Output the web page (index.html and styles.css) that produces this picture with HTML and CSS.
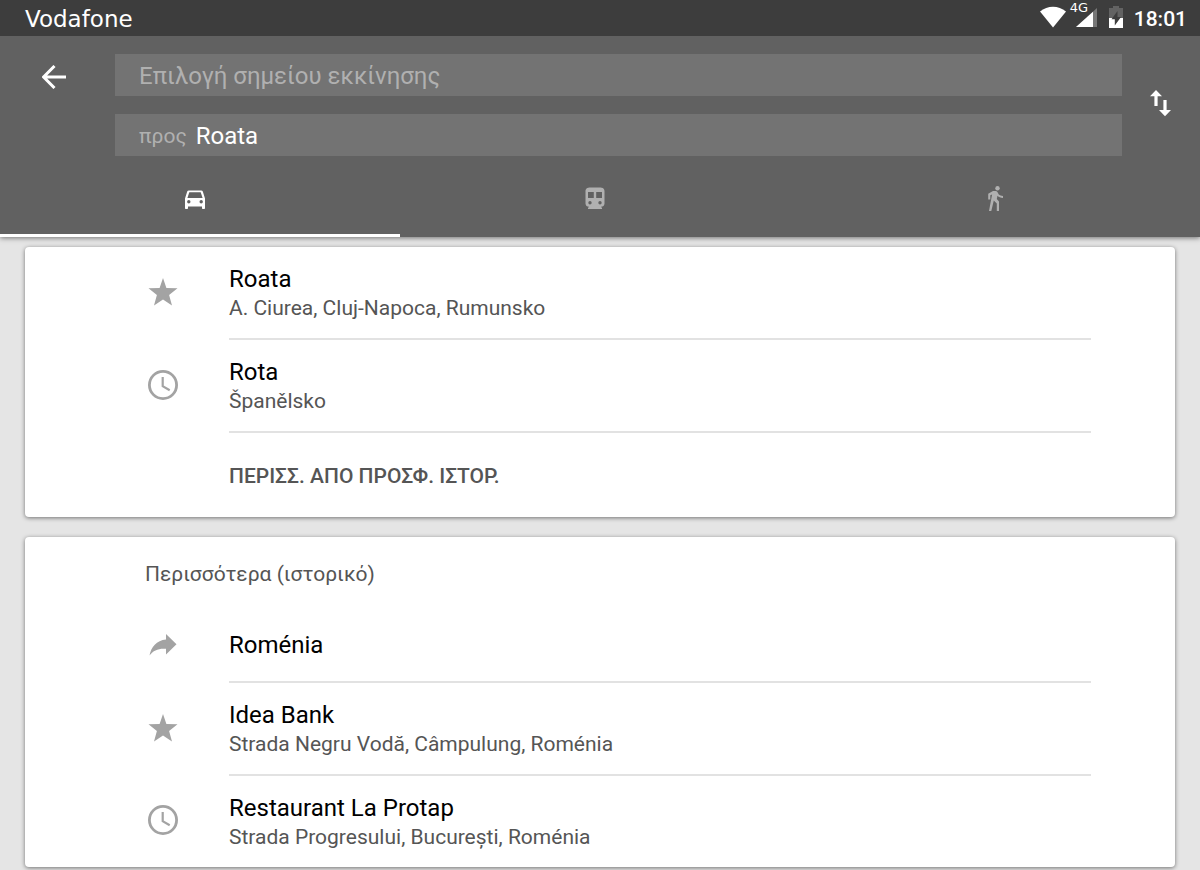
FILE: index.html
```html
<!DOCTYPE html>
<html lang="el">
<head>
<meta charset="utf-8">
<meta name="viewport" content="width=device-width, initial-scale=1">
<title>Roata</title>
<link rel="stylesheet" href="styles.css">
</head>
<body>
<svg class="defs" aria-hidden="true">
  <symbol id="star" viewBox="0 0 30 30"><path d="M15 1l3.400 9.900 11.100.3-8.400 6.900 2.900 10.400-9-6-9 6 2.900-10.400L.5 11.200l11.100-.3z"/></symbol>
  <symbol id="clock" viewBox="0 0 30 30"><g fill="none" stroke="currentColor"><circle cx="15" cy="15" r="13.600" stroke-width="2.800"/><path d="M14.700 7v9.200l7 4" stroke-width="2.200"/></g></symbol>
  <symbol id="share" viewBox="0 0 30 30"><path d="M18 4l10.500 10.300L18 24.500v-5.700c-7.500-.6-12.500 1.400-16.500 6.700C3 17.200 8.500 10.300 18 9.500z"/></symbol>
</svg>
<header class="top">
  <div class="status">
    <span class="carrier">Vodafone</span>
    <div class="indicators">
      <svg class="wifi" viewBox="0 0 26 22"><path d="M0 5.500C7.500-.8 18.500-.8 26 5.500L13 21.500z"/></svg>
      <div class="signal">
        <span class="network">4G</span>
        <svg class="bars" viewBox="0 0 21 19"><path d="M21 0v19H0z" opacity=".3"/><path d="M17 3.700V19H0z"/></svg>
      </div>
      <svg class="battery" viewBox="0 0 14 22"><path d="M4 0h6v2h4v10H0V2h4z" opacity=".2"/><path d="M0 12h14v10H0z"/><path class="bolt" d="M8.500 5v6H12l-6.200 8.500v-6.200H2.500z"/></svg>
      <time class="time">18:01</time>
    </div>
  </div>
  <form class="route">
    <button class="icon-button" type="button" aria-label="Πίσω"><svg class="back" viewBox="0 0 24 24"><path d="M12.500 1L1.600 12l10.900 11M1.600 12H24"/></svg></button>
    <div class="fields">
      <div class="field"><input class="input" type="text" aria-label="Σημείο εκκίνησης" placeholder="Επιλογή σημείου εκκίνησης"></div>
      <div class="field"><label class="prefix" for="to">προς</label><input class="input" id="to" type="text" value="Roata"></div>
    </div>
    <button class="icon-button swap-button" type="button" aria-label="Αντιστροφή"><svg class="swap" viewBox="0 0 22 28"><path d="M6 1l6 6.200H7.600V17H4.400V7.200H0zM13.400 11h3.200v10H21l-6 6.200L9 21h4.400z"/></svg></button>
  </form>
  <nav class="tabs">
    <button class="tab tab-active" type="button" aria-label="Αυτοκίνητο"><svg class="mode" viewBox="0 0 24 24"><path fill-rule="evenodd" d="M5.800 3.500h12.400c.8 0 1.300.4 1.600 1.100L22 11.500V21c0 .6-.4 1-1 1h-1c-.6 0-1-.4-1-1v-1.500H5V21c0 .6-.4 1-1 1H3c-.6 0-1-.4-1-1v-9.500l2.200-6.900c.3-.7.800-1.100 1.600-1.100zM6.300 5.200L4.400 11h15.200l-1.900-5.800zM5.800 13a1.700 1.700 0 100 3.400 1.700 1.700 0 000-3.400zm12.400 0a1.700 1.700 0 100 3.400 1.700 1.700 0 000-3.400z"/></svg></button>
    <button class="tab" type="button" aria-label="Μέσα μεταφοράς"><svg class="mode" viewBox="0 0 24 24"><path fill-rule="evenodd" d="M8 .5h8c4.500 0 5.500 1.500 5.500 4v12c0 2-1.500 3.300-3.500 3.300l1 1.200V22H5v-1l1-1.200c-2 0-3.500-1.300-3.500-3.300v-12C2.500 2 3.500.5 8 .5zM5 5v6h5.800V5zm8.200 0v6H19V5zM7 14a1.700 1.700 0 100 3.400A1.700 1.700 0 007 14zm10 0a1.700 1.700 0 100 3.400 1.700 1.700 0 000-3.400z"/></svg></button>
    <button class="tab" type="button" aria-label="Περπάτημα"><svg class="mode walk" viewBox="0 0 24 28"><circle cx="14.500" cy="3.200" r="2.200"/><path d="M10 6h2.600c.8 0 1.400.4 1.800 1.100l1.400 2.500c1 .9 2.400 1.300 4.200 1.300v2c-2.400 0-4.200-.8-5.500-2.200l-.7 3.400 2.200 2.300V26h-2.200v-7.500l-3-3L8.300 26H6l3.100-16.500-1.800.8v4.200H5.200V8.800z"/></svg></button>
  </nav>
</header>
<main class="results">
  <section class="card">
    <ul class="list">
      <li class="row"><svg class="mark"><use href="#star"/></svg><div class="place"><span class="name">Roata</span><span class="address">A. Ciurea, Cluj-Napoca, Rumunsko</span></div></li>
      <li class="row"><svg class="mark"><use href="#clock"/></svg><div class="place"><span class="name">Rota</span><span class="address">Španělsko</span></div></li>
    </ul>
    <button class="more" type="button">ΠΕΡΙΣΣ. ΑΠΟ ΠΡΟΣΦ. ΙΣΤΟΡ.</button>
  </section>
  <section class="card history">
    <h2 class="heading">Περισσότερα (ιστορικό)</h2>
    <ul class="list">
      <li class="row"><svg class="mark"><use href="#share"/></svg><div class="place place-single"><span class="name">Roménia</span></div></li>
      <li class="row"><svg class="mark"><use href="#star"/></svg><div class="place"><span class="name">Idea Bank</span><span class="address">Strada Negru Vodă, Câmpulung, Roménia</span></div></li>
      <li class="row"><svg class="mark"><use href="#clock"/></svg><div class="place"><span class="name">Restaurant La Protap</span><span class="address">Strada Progresului, București, Roménia</span></div></li>
    </ul>
  </section>
</main>
</body>
</html>
```
FILE: styles.css
```css
* { box-sizing: border-box; }
body { margin: 0; background: #e5e5e5; color: #000; font-family: Roboto, sans-serif; }
button, input { font: inherit; color: inherit; border: 0; padding: 0; margin: 0; background: none; border-radius: 0; }
button { cursor: pointer; }
svg { display: block; fill: currentColor; flex: none; }
.defs { position: absolute; width: 0; height: 0; }

.top { position: relative; background: #616161; color: #fff; box-shadow: 0 1px 5px rgba(0, 0, 0, .5); }
.status { display: flex; justify-content: space-between; align-items: center; height: 36px; padding: 0 13px 0 25px; background: #3d3d3d; }
.carrier { padding-top: 2px; font-family: "DejaVu Sans", sans-serif; font-size: 23px; line-height: 34px; }
.indicators { display: flex; align-items: center; }
.wifi { width: 26px; height: 22px; margin-bottom: 2px; }
.signal { position: relative; margin-left: 10px; }
.bars { width: 21px; height: 19px; margin-bottom: 2px; }
.network { position: absolute; top: -7px; left: -6px; font: 13px/14px "DejaVu Sans", sans-serif; }
.battery { width: 14px; height: 22px; margin-left: 12px; margin-bottom: 2px; }
.bolt { fill: #3d3d3d; }
.time { margin-left: 11px; padding-top: 2px; font-size: 21px; line-height: 34px; font-weight: 500; }

.route { display: flex; align-items: flex-start; padding-top: 18px; }
.icon-button { display: flex; justify-content: center; padding-top: 11px; width: 107px; }
.icon-button + .fields { margin-left: 8px; }
.back { width: 24px; height: 24px; fill: none; stroke: currentColor; stroke-width: 3; }
.fields { flex: 1; display: grid; gap: 18px; }
.field { display: flex; align-items: center; gap: 9px; height: 42px; padding: 2px 24px 0; background: #737373; }
.input { flex: 1; min-width: 0; height: 40px; font-size: 24px; outline: 0; }
.input::placeholder { color: #b0b0b0; opacity: 1; }
.prefix { color: #b0b0b0; font-size: 21px; }
.swap-button { width: 78px; padding-top: 35px; }
.swap { width: 22px; height: 28px; }

.tabs { display: flex; height: 81px; }
.tab { flex: 1; display: flex; justify-content: center; align-items: center; padding: 8px 10px 0 0; border-bottom: 3px solid transparent; color: #b0b0b0; }
.tab-active { color: #fff; border-bottom-color: #fff; }
.mode { width: 24px; height: 24px; }
.walk { height: 28px; }

.results { display: grid; gap: 20px; padding: 10px 25px 3px; }
.card { background: #fff; border-radius: 4px; box-shadow: 0 1px 4px rgba(0, 0, 0, .5); }
.list { list-style: none; margin: 0; padding: 0 84px 0 123px; }
.row { display: flex; align-items: center; gap: 51px; }
.mark { width: 30px; height: 30px; margin-bottom: 3px; color: #a3a3a3; }
.place { flex: 1; display: flex; flex-direction: column; padding: 18px 0 15px; border-bottom: 2px solid #e2e2e2; }
.place-single { padding: 22px 0 21px; }
.history .row:last-child .place { border-bottom: 0; }
.name { font-size: 24px; line-height: 29px; }
.address { font-size: 21px; line-height: 29px; color: #555; }
.more { display: block; padding: 2px 204px 0; height: 84px; font-size: 21px; font-weight: 500; color: #555; }
.heading { margin: 0; padding: 2px 120px 0; font-size: 21px; line-height: 70px; font-weight: 400; color: #555; }
```
